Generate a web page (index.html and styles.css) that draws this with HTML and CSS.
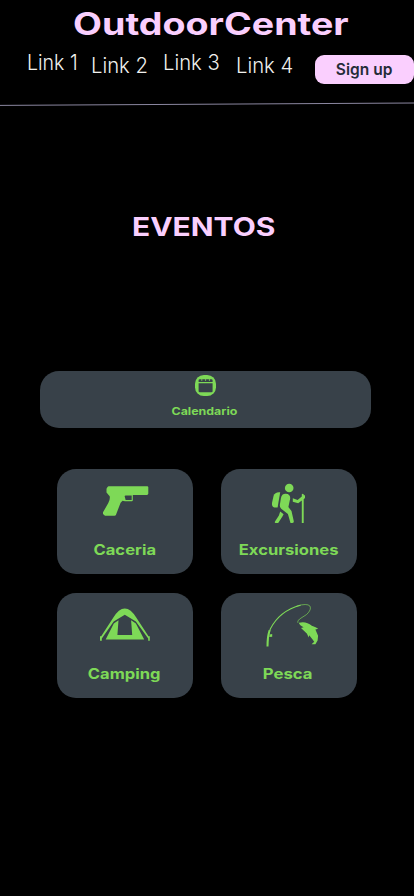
FILE: index.html
```html
<!DOCTYPE html>
<html lang="es">
<head>
<meta charset="utf-8">
<meta name="viewport" content="width=device-width, initial-scale=1">
<title>OutdoorCenter</title>
<link rel="stylesheet" href="styles.css">
</head>
<body>
<header class="header">
  <h1 class="brand"><span>OutdoorCenter</span></h1>
  <nav class="nav">
    <a class="link">Link 1</a>
    <a class="link low">Link 2</a>
    <a class="link">Link 3</a>
    <a class="link low">Link 4</a>
    <button class="signup"><span>Sign up</span></button>
  </nav>
  <svg class="rule" viewBox="0 0 414 6"><path d="M0 3.4L414 1"/></svg>
</header>
<main>
  <h2 class="heading"><span>EVENTOS</span></h2>
  <section class="card calendar">
    <svg class="cal-icon" viewBox="0 0 21 21">
      <rect width="21" height="21" rx="8.8"/>
      <path class="hole" d="M3.6 8.2H17.6V16.2Q17.6 17.3 16.4 17.3H4.8Q3.6 17.3 3.6 16.2Z"/>
      <path class="hole" d="M3.6 7.1V5.4Q3.6 4.3 4.8 4.3H16.4Q17.6 4.3 17.6 5.4V7.1Z"/>
      <path class="rings" d="M6.8 3.6v2.4M10.6 3.6v2.4M14.4 3.6v2.4"/>
    </svg>
    <span class="label calendario">Calendario</span>
  </section>
  <section class="grid">
    <article class="card tile">
      <svg viewBox="0 0 136 68"><path d="M50.5 18.1L51.5 17.3H90.6L91.3 18V24.8L90.3 26.1H75.8V31.2Q75.8 32.2 74.8 32.2H68L65.5 31.8L63.6 33.7L59 45.7Q58.6 46.7 57.5 46.7H48L46 45.1V43.3L51.3 34.1Q53.3 30.6 52.7 27.2L49.5 23.4V19.8ZM67.6 27.1L68.6 31.1H74.7V26.6H68.5Z" fill-rule="evenodd"/></svg>
      <span class="label caceria">Caceria</span>
    </article>
    <article class="card tile">
      <svg class="hiker" viewBox="0 0 136 68">
        <circle cx="69" cy="19" r="4.3"/>
        <path d="M58.8 23.2H60L57.4 38.4H54.2Q51.4 37.6 51.8 33.9L53.4 26.7Q54.6 23.3 58.8 23.2Z"/>
        <path d="M60.7 29.2Q61.5 24.7 65.5 24.8Q70.2 25 70 29.4L68.2 38L71.3 42.1L73.6 52.3Q73.7 54 71.8 54H70.3L67.7 45L61 39.8Q59.3 38.2 59.7 35.6Z"/>
        <path d="M60 42.5L63.4 45.2L62.2 47.5L58 54H55.2Q54.1 53.7 54.8 52.4L58.7 46.6Z"/>
        <path d="M72.6 29.3L77.4 31.1L81.6 27.4V25.3Q82.5 24 83.5 25.3V26.3H84.8V29L83.5 30.2V54H81.6V31.4L78 34.3L72.6 32.8Z"/>
      </svg>
      <span class="label excursiones">Excursiones</span>
    </article>
    <article class="card tile">
      <svg viewBox="0 0 136 68">
        <path d="M43 43.3H44.2L56.2 24.7Q61.8 15.4 67.8 15.4Q73.8 15.4 79.4 24.7L91.5 43.3H92.8V47.7H91.2V45.5L78.9 28.6L67.8 21.8L56.7 28.6L44.8 45.5V47.7H43Z"/>
        <path d="M56.8 30.4L61.5 27.3L60.4 42H75.2L74.1 27.3L78.9 30.4L87.2 46.5H48.7Z"/>
      </svg>
      <span class="label camping">Camping</span>
    </article>
    <article class="card tile">
      <svg class="fishing" viewBox="0 0 136 68">
        <path class="rod" d="M47 52.5Q47 43 49.8 35.8Q59 17.7 80 12.2"/>
        <path class="grip" d="M46.9 53.5Q46.8 44 49 37.3"/>
        <path d="M49 41.5L51.6 41.1V43.8L48.7 44Z"/>
        <path class="wire" d="M76 13Q86.5 10 89.3 13Q91.3 16.5 86 21.5L79 26Q76.6 28 77.2 29.8"/>
        <path d="M78.2 29.8Q85.5 27.8 91.2 32.8L95 34.2L97.6 35.7L94.8 36.6L97.5 42.8L97 47.5L94.8 51.3L91 51.2L93.6 48.8L92 46.5L88.6 42.3L88.2 44.4L86.2 40.5L80.4 35L83 34.2Q79 32.6 78.2 29.8Z"/>
      </svg>
      <span class="label pesca">Pesca</span>
    </article>
  </section>
</main>
</body>
</html>
```
FILE: styles.css
```css
* { box-sizing: border-box; }
body {
  margin: 0;
  min-height: 896px;
  background: #000;
  font-family: Inter, "Liberation Sans", sans-serif;
  overflow-x: hidden;
}
.brand, .heading { margin: 0; color: #facffe; font-weight: 700; white-space: nowrap; }
.brand { height: 48px; padding-left: 72.5px; font-size: 31px; line-height: 48px; }
.brand span, .heading span { display: inline-block; transform-origin: left; }
.brand span { transform: scaleX(1.213); }
.nav { display: grid; grid-template-columns: 64.5px 72px 72.5px 79.5px 99px; height: 54px; padding-left: 26.5px; align-items: start; }
.link { color: #f1f1ee; font-size: 21px; font-weight: 300; line-height: 30px; white-space: nowrap; transform-origin: left; transform: scaleX(.965); }
.link:first-child { transform: scaleX(.93); }
.low { margin-top: 3px; }
.signup { width: 99px; height: 29px; margin-top: 6.5px; padding: 0; border: 0; border-radius: 9px; background: #facffe; color: #252c38; font: 600 16px/29px Inter, sans-serif; }
.signup span { display: inline-block; transform: scaleX(.97); }
.rule { display: block; width: 414px; height: 6px; }
.rule path { stroke: #8b87a0; stroke-width: 1; fill: none; }
.heading { margin-top: 98px; padding-left: 132px; height: 42px; font-size: 25.5px; line-height: 42px; }
.heading span { transform: scaleX(1.175); }
.card { background: #384149; display: flex; flex-direction: column; align-items: center; color: #7ed957; }
.card svg { fill: #7ed957; flex: none; }
.calendar { width: 331px; height: 57px; margin: 123px 0 0 40px; padding-top: 3.5px; border-radius: 19px; }
.cal-icon { width: 21px; height: 21px; margin-right: 1px; }
.card .hole { fill: #384149; }
.rings { stroke: #7ed957; stroke-width: .8; }
.grid { display: grid; grid-template-columns: 136px 136px; gap: 19px 28px; margin: 41px 0 0 56.5px; }
.tile { height: 105px; border-radius: 19px; }
.tile svg { width: 136px; height: 68px; }
.tile .hiker { transform: translateX(-.8px); }
.tile .fishing { transform: translateX(-.4px); }
.label { font-size: 14.2px; font-weight: 700; line-height: 26px; white-space: nowrap; }
.calendario { font-size: 10.5px; line-height: 16px; margin-top: 8px; transform: translateX(-1.5px) scaleX(1.18); }
.caceria { transform: scaleX(1.17); }
.excursiones { transform: scaleX(1.17); }
.camping { transform: scaleX(1.165); }
.pesca { transform: translateX(-.5px) scaleX(1.18); }
.rod, .grip, .wire { fill: none; stroke: #7ed957; }
.rod { stroke-width: 1.1; }
.grip { stroke-width: 2; }
.wire { stroke-width: .65; }
```
